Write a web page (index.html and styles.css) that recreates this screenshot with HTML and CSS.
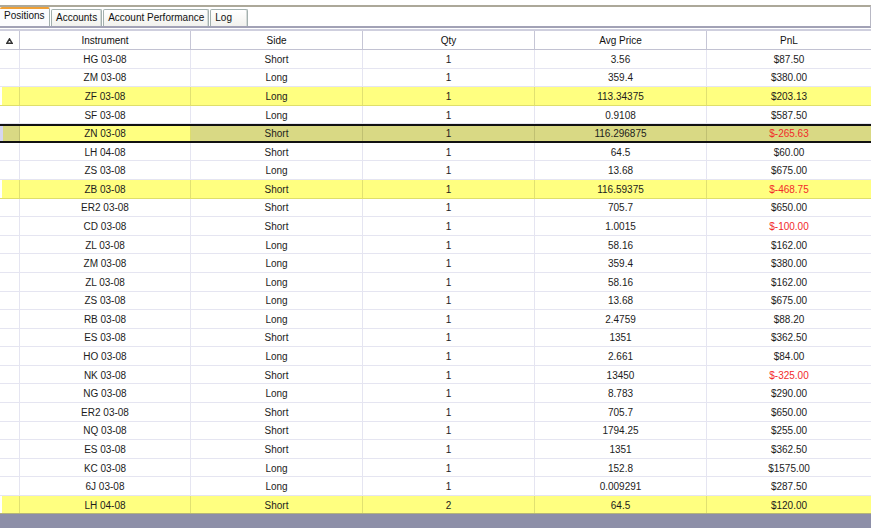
FILE: index.html
```html
<!DOCTYPE html>
<html>
<head>
<meta charset="utf-8">
<link rel="stylesheet" href="styles.css">
</head>
<body>
<div class="app">
  <div class="tabbar">
    <div class="tab active">Positions</div>
    <div class="tab">Accounts</div>
    <div class="tab">Account Performance</div>
    <div class="tab">Log</div>
  </div>
  <div class="grid">
    <div class="row hdr">
      <div class="c rh"><svg width="7" height="6" viewBox="0 0 7 6"><polygon points="3.5,0.8 6.2,5.3 0.8,5.3" fill="none" stroke="#333" stroke-width="1.4"/></svg></div>
      <div class="c">Instrument</div>
      <div class="c">Side</div>
      <div class="c">Qty</div>
      <div class="c">Avg Price</div>
      <div class="c">PnL</div>
    </div>
    <div class="row"><div class="c rh"></div><div class="c">HG 03-08</div><div class="c">Short</div><div class="c">1</div><div class="c">3.56</div><div class="c">$87.50</div></div>
    <div class="row"><div class="c rh"></div><div class="c">ZM 03-08</div><div class="c">Long</div><div class="c">1</div><div class="c">359.4</div><div class="c">$380.00</div></div>
    <div class="row hl"><div class="c rh"></div><div class="c">ZF 03-08</div><div class="c">Long</div><div class="c">1</div><div class="c">113.34375</div><div class="c">$203.13</div></div>
    <div class="row"><div class="c rh"></div><div class="c">SF 03-08</div><div class="c">Long</div><div class="c">1</div><div class="c">0.9108</div><div class="c">$587.50</div></div>
    <div class="row sel"><div class="c rh"></div><div class="c cur">ZN 03-08</div><div class="c">Short</div><div class="c">1</div><div class="c">116.296875</div><div class="c neg">$-265.63</div></div>
    <div class="row"><div class="c rh"></div><div class="c">LH 04-08</div><div class="c">Short</div><div class="c">1</div><div class="c">64.5</div><div class="c">$60.00</div></div>
    <div class="row"><div class="c rh"></div><div class="c">ZS 03-08</div><div class="c">Long</div><div class="c">1</div><div class="c">13.68</div><div class="c">$675.00</div></div>
    <div class="row hl"><div class="c rh"></div><div class="c">ZB 03-08</div><div class="c">Short</div><div class="c">1</div><div class="c">116.59375</div><div class="c neg">$-468.75</div></div>
    <div class="row"><div class="c rh"></div><div class="c">ER2 03-08</div><div class="c">Short</div><div class="c">1</div><div class="c">705.7</div><div class="c">$650.00</div></div>
    <div class="row"><div class="c rh"></div><div class="c">CD 03-08</div><div class="c">Short</div><div class="c">1</div><div class="c">1.0015</div><div class="c neg">$-100.00</div></div>
    <div class="row"><div class="c rh"></div><div class="c">ZL 03-08</div><div class="c">Long</div><div class="c">1</div><div class="c">58.16</div><div class="c">$162.00</div></div>
    <div class="row"><div class="c rh"></div><div class="c">ZM 03-08</div><div class="c">Long</div><div class="c">1</div><div class="c">359.4</div><div class="c">$380.00</div></div>
    <div class="row"><div class="c rh"></div><div class="c">ZL 03-08</div><div class="c">Long</div><div class="c">1</div><div class="c">58.16</div><div class="c">$162.00</div></div>
    <div class="row"><div class="c rh"></div><div class="c">ZS 03-08</div><div class="c">Long</div><div class="c">1</div><div class="c">13.68</div><div class="c">$675.00</div></div>
    <div class="row"><div class="c rh"></div><div class="c">RB 03-08</div><div class="c">Long</div><div class="c">1</div><div class="c">2.4759</div><div class="c">$88.20</div></div>
    <div class="row"><div class="c rh"></div><div class="c">ES 03-08</div><div class="c">Short</div><div class="c">1</div><div class="c">1351</div><div class="c">$362.50</div></div>
    <div class="row"><div class="c rh"></div><div class="c">HO 03-08</div><div class="c">Long</div><div class="c">1</div><div class="c">2.661</div><div class="c">$84.00</div></div>
    <div class="row"><div class="c rh"></div><div class="c">NK 03-08</div><div class="c">Short</div><div class="c">1</div><div class="c">13450</div><div class="c neg">$-325.00</div></div>
    <div class="row"><div class="c rh"></div><div class="c">NG 03-08</div><div class="c">Long</div><div class="c">1</div><div class="c">8.783</div><div class="c">$290.00</div></div>
    <div class="row"><div class="c rh"></div><div class="c">ER2 03-08</div><div class="c">Short</div><div class="c">1</div><div class="c">705.7</div><div class="c">$650.00</div></div>
    <div class="row"><div class="c rh"></div><div class="c">NQ 03-08</div><div class="c">Short</div><div class="c">1</div><div class="c">1794.25</div><div class="c">$255.00</div></div>
    <div class="row"><div class="c rh"></div><div class="c">ES 03-08</div><div class="c">Short</div><div class="c">1</div><div class="c">1351</div><div class="c">$362.50</div></div>
    <div class="row"><div class="c rh"></div><div class="c">KC 03-08</div><div class="c">Long</div><div class="c">1</div><div class="c">152.8</div><div class="c">$1575.00</div></div>
    <div class="row"><div class="c rh"></div><div class="c">6J 03-08</div><div class="c">Long</div><div class="c">1</div><div class="c">0.009291</div><div class="c">$287.50</div></div>
    <div class="row hl last"><div class="c rh"></div><div class="c">LH 04-08</div><div class="c">Short</div><div class="c">2</div><div class="c">64.5</div><div class="c">$120.00</div></div>
  </div>
  <div class="empty"></div>
</div>
</body>
</html>
```

FILE: styles.css
```css
* { box-sizing: border-box; }
html, body { margin: 0; padding: 0; height: 100%; }
body {
  background: #ffffff;
  font-family: "Liberation Sans", Arial, sans-serif;
  font-size: 10px;
  color: #1c1c1c;
}
.app {
  width: 871px;
  height: 528px;
  display: flex;
  flex-direction: column;
  overflow: hidden;
}
.tabbar {
  margin-top: 5px;
  height: 23px;
  border-top: 2px solid #aca899;
  border-right: 1px solid #b8b8c4;
  border-bottom: 2px solid #a2a2b6;
  display: flex;
  align-items: flex-end;
  flex-shrink: 0;
}
.tab {
  height: 17px;
  min-width: 38px;
  padding: 0 4px;
  margin-left: 1px;
  border: 1px solid #a3b0ae;
  border-bottom: none;
  border-radius: 2px 2px 0 0;
  background: linear-gradient(#ffffff, #f2f2ee);
  box-shadow: inset -1px 0 0 #d6dbd9;
  line-height: 16px;
  color: #111;
  white-space: nowrap;
}
.tab.active {
  margin-left: 0;
  height: 19px;
  width: 50px;
  padding: 0 4px;
  border-top: 2px solid #f0a035;
  border-left: none;
  background: #fcfcfe;
  box-shadow: none;
  line-height: 14px;
}
.grid {
  display: flex;
  flex-direction: column;
  flex-shrink: 0;
}
.row {
  display: grid;
  grid-template-columns: 20px 171px 172px 172px 172px 1fr;
  height: 18.58px;
  border-bottom: 1px solid rgba(100, 100, 170, 0.17);
}
.c {
  border-right: 1px solid rgba(100, 100, 170, 0.17);
  display: flex;
  align-items: center;
  justify-content: center;
  white-space: nowrap;
  padding-top: 1px;
}
.c:last-child { border-right: none; }
.hdr {
  margin-top: 1px;
  height: 21px;
  border-top: 2px solid #cfcfde;
  border-bottom: 1px solid #c2c2d2;
  color: #111;
}
.hdr .c {
  border-right: 1px solid #c6c6d6;
  padding-top: 1px;
}
.hdr .c:last-child { border-right: none; }
.hdr .rh svg { display: block; margin-top: 1px; }
.hl { background: #ffff80; box-shadow: inset 2px 0 0 #ffffff; }
.hl .c { border-right-color: rgba(120, 120, 60, 0.22); }
.hl { border-bottom-color: rgba(150, 150, 60, 0.3); }
.sel {
  background: #d9d984;
  border-top: 2px solid #111;
  border-bottom: 2px solid #111;
}
.sel .c { padding-top: 0; }
.sel .rh { box-shadow: inset 3px 0 0 #d6d6f0; }
.sel .c { border-right-color: rgba(120, 120, 60, 0.25); }
.sel .cur { background: #ffff80; }
.neg { color: #f22a2a; }
.last { border-bottom: 1px solid #b4b47a; }
.empty {
  flex: 1;
  background: #8d8fa8;
}
```
